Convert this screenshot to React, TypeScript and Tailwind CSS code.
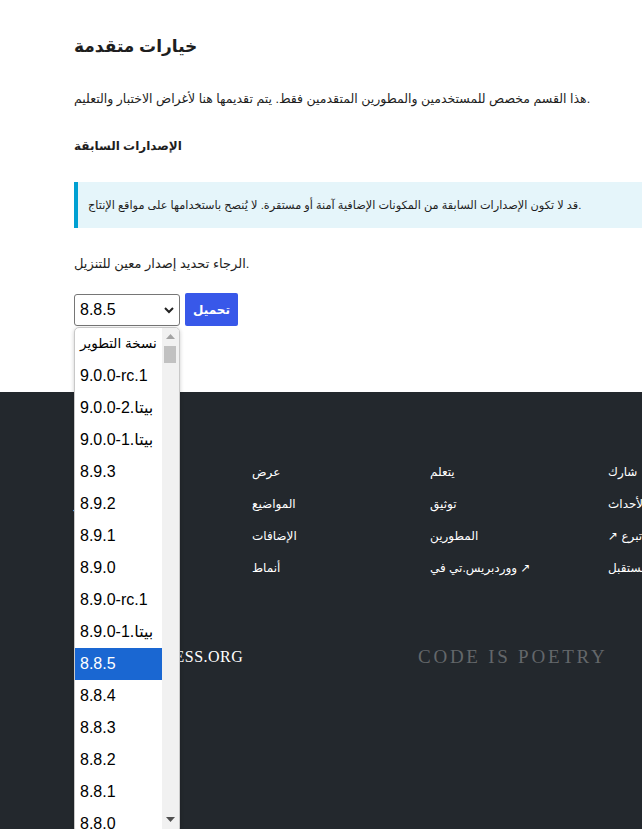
import React from "react";

const items = [
  "9.0.0-rc.1",
  "9.0.0-بيتا.2",
  "9.0.0-بيتا.1",
  "8.9.3",
  "8.9.2",
  "8.9.1",
  "8.9.0",
  "8.9.0-rc.1",
  "8.9.0-بيتا.1",
  "8.8.5",
  "8.8.4",
  "8.8.3",
  "8.8.2",
  "8.8.1",
  "8.8.0",
];

const cols = [
  ["حول", "الأخبار", "استضافة", "الخصوصية"],
  ["عرض", "المواضيع", "الإضافات", "أنماط"],
  ["يتعلم", "توثيق", "المطورين", "ووردبريس.تي في ↗"],
  ["شارك", "الأحداث", "↗ تبرع", "خمسة للمستقبل"],
];

export default function App() {
  return (
    <div className="relative w-[642px] h-[829px] overflow-hidden bg-white font-['Liberation_Sans','DejaVu_Sans',sans-serif] text-[#1e1e1e]">
      <main className="pl-[74px] pt-[33px] h-[392px]">
        <h1 className="text-[17px] font-bold leading-[28px]">خيارات متقدمة</h1>
        <p className="mt-[28px] text-[12.5px] leading-[20px] text-[#1e1e1e]">
          هذا القسم مخصص للمستخدمين والمطورين المتقدمين فقط. يتم تقديمها هنا لأغراض الاختبار والتعليم.
        </p>
        <h2 className="mt-[27px] text-[12px] font-bold leading-[20px]">الإصدارات السابقة</h2>
        <div className="mt-[26px] h-[46px] w-[700px] flex items-center border-l-4 border-[#00a0d2] bg-[#e5f5fa] pl-[10px] text-[11.3px]">
          قد لا تكون الإصدارات السابقة من المكونات الإضافية آمنة أو مستقرة. لا يُنصح باستخدامها على مواقع الإنتاج.
        </div>
        <p className="mt-[26px] text-[13px] leading-[20px]">الرجاء تحديد إصدار معين للتنزيل.</p>
        <div className="mt-[19px] flex items-center gap-[5px]">
          <div className="flex h-[32px] w-[106px] items-center justify-between rounded-[3px] border border-[#767676] pl-[5px] pr-[4px] font-['Liberation_Sans',sans-serif] text-[16px] text-black">
            <span>8.8.5</span>
            <svg width="12" height="12" viewBox="0 0 12 12">
              <path d="M2 4 L6 8 L10 4" fill="none" stroke="#222" strokeWidth="2" />
            </svg>
          </div>
          <div className="flex h-[33px] w-[53px] items-center justify-center rounded-[2px] bg-[#3858e9] text-[12px] font-bold text-white">
            تحميل
          </div>
        </div>
      </main>

      <footer className="h-[437px] bg-[#23282d] pl-[74px] pt-[70px] text-white">
        <div className="flex">
          {cols.map((c, i) => (
            <ul key={i} className="w-[178px] shrink-0 text-[12px]">
              {c.map((t) => (
                <li key={t} className="h-[32px] leading-[20px] whitespace-nowrap">
                  {t}
                </li>
              ))}
            </ul>
          ))}
        </div>
        <div className="mt-[53px] flex items-center">
          <div className="w-[344px] pl-[29px] font-['Liberation_Serif',serif] text-[16px] tracking-[0.5px] text-white">
            WORDPRESS.ORG
          </div>
          <div className="font-['Liberation_Serif',serif] text-[19px] tracking-[2.75px] text-[#63676a]">
            CODE IS POETRY
          </div>
        </div>
      </footer>

      <div className="absolute left-[74px] top-[327px] flex h-[506px] w-[106px] rounded-[5px] border border-[#c8c8c8] bg-white shadow-[0_1px_4px_rgba(0,0,0,0.2)] overflow-hidden">
        <ul className="w-[87px] font-['Liberation_Sans','DejaVu_Sans',sans-serif] text-[16px] text-black">
          <li className="h-[32px] pl-[5px] leading-[32px] whitespace-nowrap text-[13.5px]">نسخة التطوير</li>
          {items.map((t, i) => (
            <li
              key={t}
              className={
                i === 9
                  ? "h-[32px] bg-[#1a67d2] pl-[5px] leading-[32px] whitespace-nowrap text-white"
                  : "h-[32px] pl-[5px] leading-[32px] whitespace-nowrap"
              }
            >
              {t}
            </li>
          ))}
        </ul>
        <div className="relative w-[17px] bg-[#f1f1f1]">
          <svg className="absolute left-[4px] top-[6px]" width="9" height="6" viewBox="0 0 9 6">
            <path d="M0 5 L4.5 0 L9 5 Z" fill="#a3a3a3" />
          </svg>
          <div className="absolute left-[2px] top-[18px] h-[17px] w-[12px] bg-[#c1c1c1]" />
          <svg className="absolute left-[4px] top-[489px]" width="9" height="6" viewBox="0 0 9 6">
            <path d="M0 0 L9 0 L4.5 5 Z" fill="#505050" />
          </svg>
        </div>
      </div>
    </div>
  );
}
